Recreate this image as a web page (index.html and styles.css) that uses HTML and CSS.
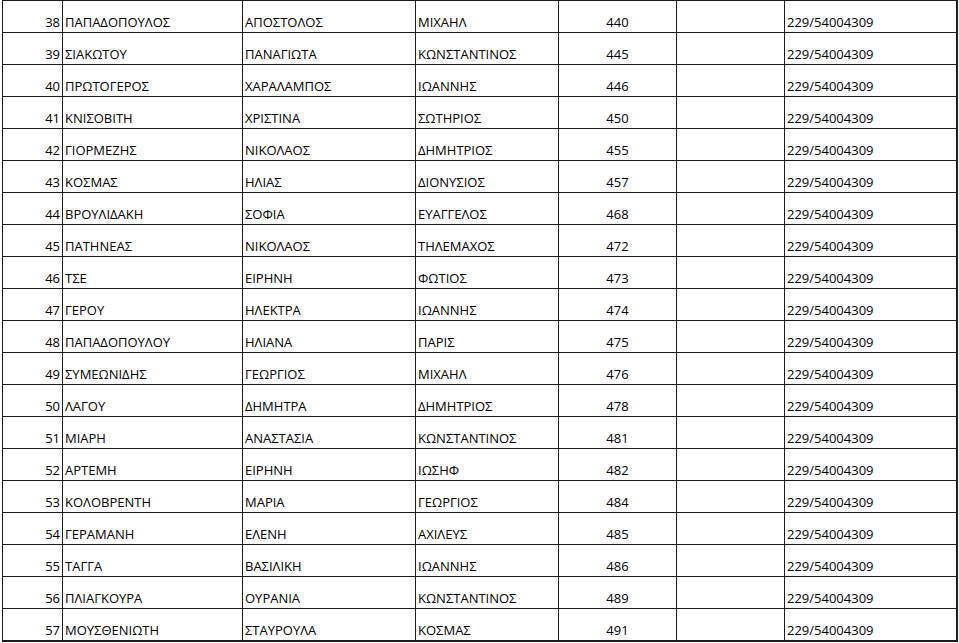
FILE: index.html
```html
<!DOCTYPE html>
<html>
<head>
<meta charset="utf-8">
<link rel="stylesheet" href="styles.css">
</head>
<body>
<table class="list">
<colgroup>
<col class="c-no"><col class="c-last"><col class="c-first"><col class="c-father"><col class="c-num"><col class="c-empty"><col class="c-ref">
</colgroup>
<tbody>
<tr><td class="no">38</td><td>ΠΑΠΑΔΟΠΟΥΛΟΣ</td><td>ΑΠΟΣΤΟΛΟΣ</td><td>ΜΙΧΑΗΛ</td><td class="num">440</td><td></td><td>229/54004309</td></tr>
<tr><td class="no">39</td><td>ΣΙΑΚΩΤΟΥ</td><td>ΠΑΝΑΓΙΩΤΑ</td><td>ΚΩΝΣΤΑΝΤΙΝΟΣ</td><td class="num">445</td><td></td><td>229/54004309</td></tr>
<tr><td class="no">40</td><td>ΠΡΩΤΟΓΕΡΟΣ</td><td>ΧΑΡΑΛΑΜΠΟΣ</td><td>ΙΩΑΝΝΗΣ</td><td class="num">446</td><td></td><td>229/54004309</td></tr>
<tr><td class="no">41</td><td>ΚΝΙΣΟΒΙΤΗ</td><td>ΧΡΙΣΤΙΝΑ</td><td>ΣΩΤΗΡΙΟΣ</td><td class="num">450</td><td></td><td>229/54004309</td></tr>
<tr><td class="no">42</td><td>ΓΙΟΡΜΕΖΗΣ</td><td>ΝΙΚΟΛΑΟΣ</td><td>ΔΗΜΗΤΡΙΟΣ</td><td class="num">455</td><td></td><td>229/54004309</td></tr>
<tr><td class="no">43</td><td>ΚΟΣΜΑΣ</td><td>ΗΛΙΑΣ</td><td>ΔΙΟΝΥΣΙΟΣ</td><td class="num">457</td><td></td><td>229/54004309</td></tr>
<tr><td class="no">44</td><td>ΒΡΟΥΛΙΔΑΚΗ</td><td>ΣΟΦΙΑ</td><td>ΕΥΑΓΓΕΛΟΣ</td><td class="num">468</td><td></td><td>229/54004309</td></tr>
<tr><td class="no">45</td><td>ΠΑΤΗΝΕΑΣ</td><td>ΝΙΚΟΛΑΟΣ</td><td>ΤΗΛΕΜΑΧΟΣ</td><td class="num">472</td><td></td><td>229/54004309</td></tr>
<tr><td class="no">46</td><td>ΤΣΕ</td><td>ΕΙΡΗΝΗ</td><td>ΦΩΤΙΟΣ</td><td class="num">473</td><td></td><td>229/54004309</td></tr>
<tr><td class="no">47</td><td>ΓΕΡΟΥ</td><td>ΗΛΕΚΤΡΑ</td><td>ΙΩΑΝΝΗΣ</td><td class="num">474</td><td></td><td>229/54004309</td></tr>
<tr><td class="no">48</td><td>ΠΑΠΑΔΟΠΟΥΛΟΥ</td><td>ΗΛΙΑΝΑ</td><td>ΠΑΡΙΣ</td><td class="num">475</td><td></td><td>229/54004309</td></tr>
<tr><td class="no">49</td><td>ΣΥΜΕΩΝΙΔΗΣ</td><td>ΓΕΩΡΓΙΟΣ</td><td>ΜΙΧΑΗΛ</td><td class="num">476</td><td></td><td>229/54004309</td></tr>
<tr><td class="no">50</td><td>ΛΑΓΟΥ</td><td>ΔΗΜΗΤΡΑ</td><td>ΔΗΜΗΤΡΙΟΣ</td><td class="num">478</td><td></td><td>229/54004309</td></tr>
<tr><td class="no">51</td><td>ΜΙΑΡΗ</td><td>ΑΝΑΣΤΑΣΙΑ</td><td>ΚΩΝΣΤΑΝΤΙΝΟΣ</td><td class="num">481</td><td></td><td>229/54004309</td></tr>
<tr><td class="no">52</td><td>ΑΡΤΕΜΗ</td><td>ΕΙΡΗΝΗ</td><td>ΙΩΣΗΦ</td><td class="num">482</td><td></td><td>229/54004309</td></tr>
<tr><td class="no">53</td><td>ΚΟΛΟΒΡΕΝΤΗ</td><td>ΜΑΡΙΑ</td><td>ΓΕΩΡΓΙΟΣ</td><td class="num">484</td><td></td><td>229/54004309</td></tr>
<tr><td class="no">54</td><td>ΓΕΡΑΜΑΝΗ</td><td>ΕΛΕΝΗ</td><td>ΑΧΙΛΕΥΣ</td><td class="num">485</td><td></td><td>229/54004309</td></tr>
<tr><td class="no">55</td><td>ΤΑΓΓΑ</td><td>ΒΑΣΙΛΙΚΗ</td><td>ΙΩΑΝΝΗΣ</td><td class="num">486</td><td></td><td>229/54004309</td></tr>
<tr><td class="no">56</td><td>ΠΛΙΑΓΚΟΥΡΑ</td><td>ΟΥΡΑΝΙΑ</td><td>ΚΩΝΣΤΑΝΤΙΝΟΣ</td><td class="num">489</td><td></td><td>229/54004309</td></tr>
<tr><td class="no">57</td><td>ΜΟΥΣΘΕΝΙΩΤΗ</td><td>ΣΤΑΥΡΟΥΛΑ</td><td>ΚΟΣΜΑΣ</td><td class="num">491</td><td></td><td>229/54004309</td></tr>
</tbody>
</table>
</body>
</html>
```
FILE: styles.css
```css
html, body {
  margin: 0;
  padding: 0;
  background: #ffffff;
}
body {
  padding-left: 2px;
  font-family: "Open Sans", "Liberation Sans", sans-serif;
  font-size: 13px;
  color: #000000;
}
.list {
  border-collapse: collapse;
  table-layout: fixed;
  width: 954px;
}
.c-no { width: 60px; }
.c-last { width: 180px; }
.c-first { width: 173px; }
.c-father { width: 143px; }
.c-num { width: 118px; }
.c-empty { width: 108px; }
.c-ref { width: 172px; }
.list td {
  border: 1px solid #1c1c1c;
  height: 32px;
  padding: 0 0 1px 2px;
  line-height: 17px;
  vertical-align: bottom;
  white-space: nowrap;
  box-sizing: border-box;
}
.list tr td:last-child {
  border-right-width: 2px;
}
.list tr:last-child td {
  border-bottom-width: 2px;
}
.list td.no {
  text-align: right;
  padding: 0 2px 1px 0;
}
.list td.num {
  text-align: center;
  padding: 0 0 1px 0;
}
```
